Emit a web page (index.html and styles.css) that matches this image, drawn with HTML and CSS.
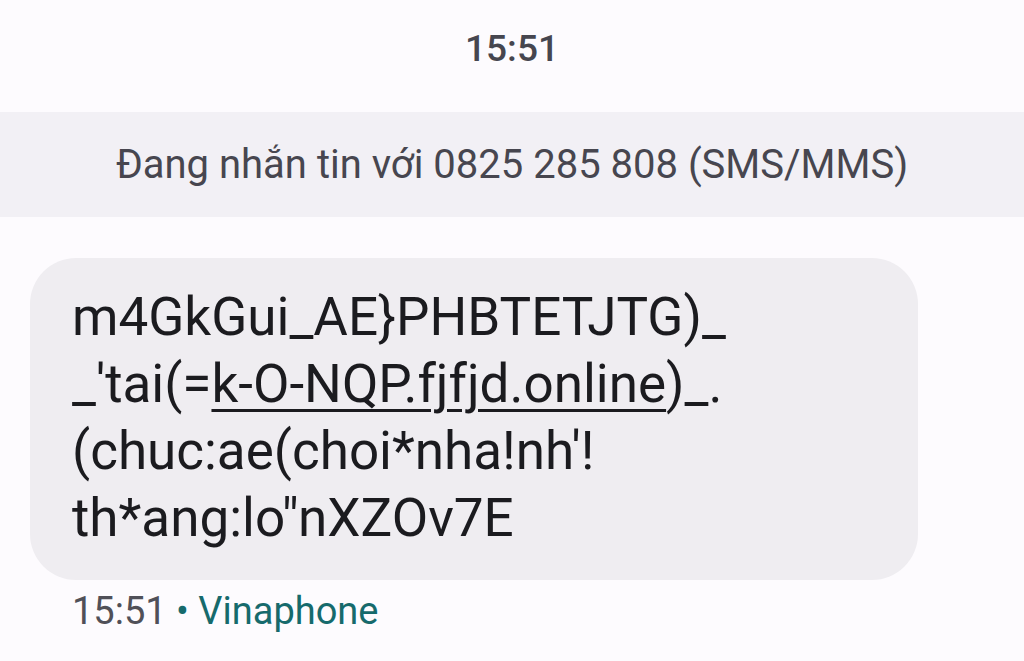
FILE: index.html
```html
<!DOCTYPE html>
<html lang="vi">
<head>
    <meta charset="UTF-8">
    <meta name="viewport" content="width=device-width, initial-scale=1.0">
    <title>Tin nhắn</title>
    <link rel="stylesheet" href="styles.css">
</head>
<body>
    <div class="gio">15:51</div>

    <div class="thongtin">Đang nhắn tin với 0825 285 808 (SMS/MMS)</div>

    <div class="tinnhan">
        <div class="bong">
            m4GkGui_AE}PHBTETJTG)_<br>
            _'tai(=<span class="lienket">k-O-NQP.fjfjd.online</span>)_.<br>
            (chuc:ae(choi*nha!nh'!<br>
            th*ang:lo"nXZOv7E
        </div>
        <div class="chantin">15:51 <span class="mang">• Vinaphone</span></div>
    </div>
</body>
</html>
```

FILE: styles.css
```css
* {
    margin: 0;
    padding: 0;
    box-sizing: border-box;
}
body, html {
    height: 100%;
}
body {
    background-color: #fdfbfe;
    font-family: Roboto, "Noto Sans", sans-serif;
    color: #1c1b1f;
}
/* Gio o tren cung */
.gio {
    height: 112px;
    padding-top: 27px;
    text-align: center;
    font-size: 37px;
    font-weight: 500;
    color: #46464f;
}
/* Dai thong tin */
.thongtin {
    height: 105px;
    background-color: #f2f0f5;
    display: flex;
    align-items: center;
    justify-content: center;
    font-size: 40px;
    color: #47464f;
}
/* Bong tin nhan */
.tinnhan {
    padding: 41px 0 0 30px;
}
.bong {
    width: 888px;
    height: 322px;
    padding: 26px 40px 0 42px;
    background-color: #efedf1;
    border-radius: 46px;
    font-size: 53px;
    line-height: 67px;
    color: #1b1b1f;
}
.lienket {
    text-decoration: underline;
    text-underline-offset: 7px;
    text-decoration-thickness: 3px;
}
.chantin {
    padding: 9px 0 0 42px;
    font-size: 38px;
    color: #505058;
}
.mang {
    color: #166a6c;
}
```
